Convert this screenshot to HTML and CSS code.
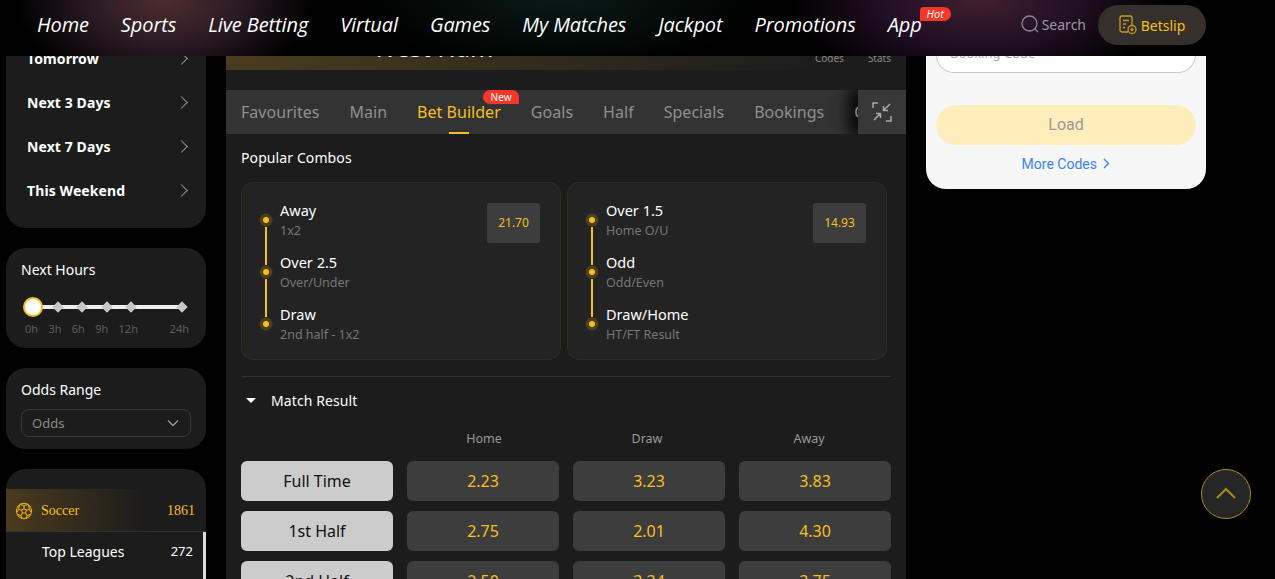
FILE: index.html
```html
<!DOCTYPE html>
<html lang="en">
<head>
  <meta charset="UTF-8">
  <title>Bet Builder</title>
  <link rel="stylesheet" href="styles.css">
</head>
<body>

  <header class="topbar">
    <nav class="nav">
      <a>Home</a>
      <a>Sports</a>
      <a>Live Betting</a>
      <a>Virtual</a>
      <a>Games</a>
      <a>My Matches</a>
      <a>Jackpot</a>
      <a>Promotions</a>
      <a class="nav-app">App<span class="hot">Hot</span></a>
    </nav>
    <div class="search">
      <svg width="20" height="20" viewBox="0 0 20 20" fill="none" stroke="#8d8a90" stroke-width="1.3"><circle cx="9.5" cy="9.5" r="7.5"/><path d="M15 15l3 3"/></svg>
      <span>Search</span>
    </div>
    <div class="betslip">
      <svg width="18" height="20" viewBox="0 0 18 20" fill="none" stroke="#c89a1f" stroke-width="1.3"><path d="M9 17H3a2 2 0 0 1-2-2V3a2 2 0 0 1 2-2h8a2 2 0 0 1 2 2v7"/><path d="M4 5.500h6M4 9h3M4 12.500h2"/><circle cx="13" cy="14.500" r="4"/><path d="M11.300 14.500h3.400M13 12.800v3.400"/></svg>
      <span>Betslip</span>
    </div>
  </header>

  <div class="page">

    <aside class="left">
      <div class="panel days">
        <div class="day">Today<i class="chev"></i></div>
        <div class="day">Tomorrow<i class="chev"></i></div>
        <div class="day">Next 3 Days<i class="chev"></i></div>
        <div class="day">Next 7 Days<i class="chev"></i></div>
        <div class="day">This Weekend<i class="chev"></i></div>
      </div>

      <div class="panel hours">
        <div class="panel-title">Next Hours</div>
        <div class="slider">
          <span class="knob"></span>
          <span class="tick"></span>
          <span class="tick"></span>
          <span class="tick"></span>
          <span class="tick"></span>
          <span class="tick tick-last"></span>
        </div>
        <div class="hour-labels">
          <span>0h</span><span>3h</span><span>6h</span><span>9h</span><span>12h</span><span class="hour-last">24h</span>
        </div>
      </div>

      <div class="panel odds-range">
        <div class="panel-title">Odds Range</div>
        <div class="select">
          <span>Odds</span>
          <svg width="12" height="8" viewBox="0 0 12 8" fill="none" stroke="#999" stroke-width="1.300"><path d="M1 1.500l5 5 5-5"/></svg>
        </div>
      </div>

      <div class="panel sports">
        <div class="sport">
          <svg width="18" height="18" viewBox="0 0 18 18" fill="none" stroke="#e0ab1c" stroke-width="1.100"><circle cx="9" cy="9" r="7.600"/><path d="M9 6.500l2.400 1.700-.9 2.800h-3l-.9-2.800z"/><path d="M9 6.500V3.500L5 2.500M9 3.500l4-1M11.400 8.200l3-1 1.300 2.800M14.400 7.200L13.500 3M10.500 11l1.800 2.600-1.500 3M12.300 13.600l3-1M7.500 11l-1.800 2.600 1.500 3M5.700 13.600l-3-1M6.600 8.200l-3-1-1.300 2.800M3.600 7.200L4.500 3"/></svg>
          <span class="sport-name">Soccer</span>
          <span class="sport-count">1861</span>
        </div>
        <div class="leagues">
          <div class="league"><span>Top Leagues</span><span class="league-count">272</span></div>
        </div>
      </div>
    </aside>

    <main class="center">
      <section class="hero">
        <div class="score">0 00</div>
        <div class="team">West Ham</div>
        <div class="hero-links"><span>Codes</span><span>Stats</span></div>
      </section>

      <div class="tabs">
        <div class="tab-list">
          <a>Favourites</a>
          <a>Main</a>
          <a class="active">Bet Builder<span class="new">New</span></a>
          <a>Goals</a>
          <a>Half</a>
          <a>Specials</a>
          <a>Bookings</a>
          <a>Corners</a>
        </div>
        <div class="collapse">
          <svg width="20" height="20" viewBox="0 0 20 20" fill="none" stroke="#a8a8a8" stroke-width="1.500"><path d="M1 6V1h5M14 19h5v-5M11.500 8.500L18 2M11.500 4v4.500H16M8.500 11.500L2 18M8.500 16v-4.500H4"/></svg>
        </div>
      </div>

      <section class="content">
        <h4 class="combos-title">Popular Combos</h4>
        <div class="combos">
          <div class="combo">
            <div class="legs">
              <div class="leg"><b>Away</b><small>1x2</small></div>
              <div class="leg"><b>Over 2.5</b><small>Over/Under</small></div>
              <div class="leg"><b>Draw</b><small>2nd half - 1x2</small></div>
            </div>
            <div class="combo-odd">21.70</div>
          </div>
          <div class="combo">
            <div class="legs">
              <div class="leg"><b>Over 1.5</b><small>Home O/U</small></div>
              <div class="leg"><b>Odd</b><small>Odd/Even</small></div>
              <div class="leg"><b>Draw/Home</b><small>HT/FT Result</small></div>
            </div>
            <div class="combo-odd">14.93</div>
          </div>
        </div>

        <div class="market-head"><i class="caret"></i>Match Result</div>

        <div class="market">
          <span></span>
          <div class="col-head col-home">Home</div>
          <div class="col-head col-draw">Draw</div>
          <div class="col-head col-away">Away</div>

          <button class="period">Full Time</button>
          <button class="odd">2.23</button>
          <button class="odd">3.23</button>
          <button class="odd">3.83</button>

          <button class="period">1st Half</button>
          <button class="odd">2.75</button>
          <button class="odd">2.01</button>
          <button class="odd">4.30</button>

          <button class="period">2nd Half</button>
          <button class="odd">2.50</button>
          <button class="odd">3.34</button>
          <button class="odd">3.75</button>
        </div>
      </section>
    </main>

    <aside class="right">
      <div class="code-card">
        <div class="code-input">Booking Code</div>
        <div class="load">Load</div>
        <div class="more">More Codes
          <svg width="7" height="11" viewBox="0 0 7 11" fill="none" stroke="#3b82f6" stroke-width="1.400"><path d="M1 1l4.500 4.500L1 10"/></svg>
        </div>
      </div>
    </aside>
  </div>

  <button class="to-top">
    <svg width="20" height="12" viewBox="0 0 20 12" fill="none" stroke="#a98a22" stroke-width="2"><path d="M1 11l9-9 9 9"/></svg>
  </button>

</body>
</html>
```

FILE: styles.css
```css
* {
  box-sizing: border-box;
}

html, body {
  height: 100%;
}

body {
  margin: 0;
  background: #000;
  color: #fff;
  font-family: "Noto Sans", Arial, sans-serif;
  font-size: 14px;
  overflow: hidden;
}

.topbar {
  position: fixed;
  top: 0;
  left: 0;
  right: 0;
  height: 56px;
  z-index: 10;
  display: flex;
  align-items: center;
  padding: 0 69px 6px 37px;
  background:
    radial-gradient(ellipse 150px 90px at 165px 0, #4e2e2e 0%, #2a1a24 50%, rgba(0,0,0,0) 100%),
    radial-gradient(ellipse 190px 90px at 980px 0, #40202e 0%, #220f24 50%, rgba(0,0,0,0) 100%),
    radial-gradient(ellipse 200px 70px at 560px 0, #0a1a16 0%, rgba(0,0,0,0) 100%),
    #000;
}

.nav {
  display: flex;
  gap: 32px;
  flex: 1;
  margin-bottom: 2px;
  font-family: "Open Sans", Arial, sans-serif;
  font-size: 20px;
  font-style: italic;
  letter-spacing: -0.1px;
}

.nav-app {
  position: relative;
}

.hot {
  position: absolute;
  left: 32px;
  top: -4px;
  width: 31px;
  height: 14px;
  border-radius: 4px 7px 7px 0;
  background: #f5372a;
  font-size: 11px;
  line-height: 14px;
  text-align: center;
  letter-spacing: 0;
}

.search {
  display: flex;
  align-items: center;
  gap: 2px;
  margin-right: 12px;
  margin-bottom: 2px;
  color: #9a98a0;
}

.betslip {
  width: 108px;
  height: 40px;
  border-radius: 20px;
  background: #35302c;
  color: #f8bf1e;
  display: flex;
  align-items: center;
  justify-content: center;
  gap: 4px;
}

.page {
  display: flex;
  gap: 20px;
  margin-top: -20px;
  padding-left: 6px;
  align-items: flex-start;
}

.left {
  width: 200px;
  display: flex;
  flex-direction: column;
  gap: 20px;
}

.panel {
  background: #1c1c1c;
  border-radius: 20px;
}

.days {
  padding-top: 12px;
  padding-bottom: 16px;
}

.day {
  height: 44px;
  padding: 0 20px 0 21px;
  display: flex;
  align-items: center;
  justify-content: space-between;
  font-weight: 700;
  font-size: 14px;
  letter-spacing: 0.1px;
}

.chev {
  width: 9px;
  height: 9px;
  border-top: 1.500px solid #999;
  border-right: 1.500px solid #999;
  transform: rotate(45deg);
}

.panel-title {
  font-size: 14px;
  line-height: 20px;
}

.hours {
  height: 100px;
  padding: 12px 15px 0;
}

.slider {
  position: relative;
  display: flex;
  align-items: center;
  gap: 16.300px;
  height: 20px;
  margin: 17px 1px 0 2px;
  padding-left: 31px;
}

.slider::before {
  content: "";
  position: absolute;
  left: 4px;
  right: 4px;
  top: 8px;
  height: 4px;
  background: #eee;
}

.knob {
  position: absolute;
  left: 0;
  top: 0;
  width: 20px;
  height: 20px;
  border-radius: 50%;
  background: #fff;
  border: 2px solid #f8bf1e;
  z-index: 1;
}

.tick {
  position: relative;
  width: 8px;
  height: 8px;
  background: #c8c8c8;
  transform: rotate(45deg);
}

.tick-last {
  margin-left: 27px;
}

.hour-labels {
  display: flex;
  margin: 4px 0 0 4px;
  font-size: 11px;
  color: #5c5c5c;
  gap: 10.300px;
}

.hour-last {
  margin-left: auto;
  margin-right: 2px;
}

.odds-range {
  height: 81px;
  padding: 12px 15px 0;
}

.select {
  margin-top: 9px;
  height: 28px;
  padding: 0 11px 0 10px;
  border: 1px solid #3a3a3a;
  border-radius: 8px;
  display: flex;
  align-items: center;
  justify-content: space-between;
  font-size: 13px;
  color: #8a8a8a;
}

.sports {
  height: 300px;
  padding-top: 20px;
}

.sport {
  height: 43px;
  padding: 2px 11px 0 9px;
  display: flex;
  align-items: center;
  background: linear-gradient(to right, #4a3b1e, rgba(74,59,30,0) 70%);
  border-bottom: 1px solid #333;
  color: #f8bf1e;
  font-family: "Liberation Serif", serif;
  font-size: 14px;
}

.sport-name {
  margin-left: 8px;
  flex: 1;
}

.leagues {
  height: 220px;
  border-right: 3px solid #ddd;
}

.league {
  height: 38px;
  padding: 0 10px 0 36px;
  display: flex;
  align-items: center;
  justify-content: space-between;
}

.league-count {
  font-size: 13px;
}

.center {
  width: 680px;
  background: #1c1c1c;
  min-height: 700px;
}

.hero {
  position: relative;
  height: 90px;
  padding: 52px 15px 0;
  display: flex;
  background: linear-gradient(to right, #4a3c1e, rgba(72,59,30,0) 88%);
}

.score {
  font-size: 22px;
  width: 135px;
  margin-right: -3px;
  color: #ccc;
  padding-left: 28px;
  line-height: 30px;
  letter-spacing: 3px;
}

.team {
  font-size: 25px;
  line-height: 30px;
  flex: 1;
}

.hero-links {
  display: flex;
  gap: 24px;
  color: #8a8a8a;
  font-size: 10px;
  padding-top: 24px;
  margin-top: -5px;
}

.tabs {
  position: relative;
  margin-top: 20px;
  height: 44px;
  background: #333;
  display: flex;
  overflow: hidden;
}

.tab-list {
  flex: 1;
  display: flex;
  gap: 30px;
  padding-left: 15px;
  font-size: 16px;
  letter-spacing: 0.03px;
  line-height: 44px;
  color: #8f8f8f;
  white-space: nowrap;
  overflow: hidden;
}

.tab-list a {
  position: relative;
}

.tab-list .active {
  color: #f8bf1e;
}

.tab-list .active::after {
  content: "";
  position: absolute;
  left: 32px;
  bottom: 0;
  width: 20px;
  height: 2px;
  background: #f8bf1e;
}

.new {
  position: absolute;
  left: 66px;
  top: 0;
  width: 36px;
  height: 14px;
  background: #f5372a;
  color: #fff;
  font-size: 10px;
  line-height: 14px;
  text-align: center;
  border-radius: 7px 7px 0 7px;
}

.collapse {
  width: 48px;
  height: 44px;
  background: #383838;
  box-shadow: -8px 0 14px 2px rgba(0,0,0,0.85);
  display: flex;
  align-items: center;
  justify-content: center;
}

.content {
  padding: 0 15px;
}

.combos-title {
  margin: 0;
  padding-top: 14px;
  font-size: 14px;
  line-height: 20px;
  font-weight: 400;
  letter-spacing: 0.1px;
}

.combos {
  display: flex;
  gap: 6px;
  margin-top: 14px;
  padding-bottom: 16px;
  border-bottom: 1px solid #333;
}

.combo {
  width: 320px;
  height: 178px;
  background: #232323;
  border: 1px solid #2f2c1e;
  border-radius: 12px;
  padding: 18px 20px 0 38px;
  display: flex;
  justify-content: space-between;
  align-items: flex-start;
}

.leg {
  position: relative;
  height: 52px;
}

.leg b {
  display: block;
  font-weight: 400;
  font-size: 14.500px;
  line-height: 18px;
  color: #fff;
}

.leg small {
  display: block;
  margin-top: 3px;
  font-size: 12.500px;
  line-height: 18px;
  color: #777;
}

/* dot and line on the left of each leg */
.leg::before {
  content: "";
  position: absolute;
  left: -17px;
  top: 16px;
  width: 6px;
  height: 6px;
  background: #f8bf1e;
  border-radius: 50%;
  box-shadow: 0 0 0 3.500px #4b3f1c;
  z-index: 1;
}

.leg:not(:last-child)::after {
  content: "";
  position: absolute;
  left: -15px;
  top: 26px;
  width: 2px;
  height: 38px;
  background: #f8bf1e;
}

.combo-odd {
  width: 53px;
  height: 40px;
  margin-top: 2px;
  background: #3d3d3d;
  border-radius: 3px;
  color: #f8bf1e;
  font-size: 12px;
  line-height: 40px;
  text-align: center;
}

.market-head {
  display: flex;
  align-items: center;
  height: 46px;
  font-size: 14px;
  letter-spacing: 0.1px;
}

.caret {
  width: 0;
  height: 0;
  margin: 0 15px 0 5px;
  border-left: 5px solid transparent;
  border-right: 5px solid transparent;
  border-top: 5px solid #fff;
}

.market {
  display: grid;
  grid-template-columns: repeat(4, 152px);
  column-gap: 14px;
  row-gap: 10px;
  margin-top: 8px;
}

.col-head {
  height: 16px;
  margin-bottom: 4px;
  line-height: 16px;
  font-size: 12.500px;
  color: #999;
  text-align: center;
}

.col-home {
  padding-left: 2px;
}

.col-draw {
  padding-right: 4px;
}

.col-away {
  padding-right: 12px;
}

.market button {
  height: 40px;
  border: none;
  border-radius: 6px;
  font-family: inherit;
  font-size: 16px;
  padding: 0;
}

.period {
  background: #ccc;
  color: #111;
}

.odd {
  background: #3d3d3d;
  color: #f8bf1e;
}

.right {
  width: 280px;
}

.code-card {
  height: 209px;
  background: #f7f7f7;
  border-radius: 0 0 20px 20px;
  padding: 0 10px;
}

.code-input {
  height: 93px;
  padding: 64px 13px 0;
  background: #fff;
  border: 1px solid #ccc;
  border-top: none;
  border-radius: 0 0 18px 18px;
  color: #aaa;
  font-size: 13px;
}

.load {
  margin-top: 32px;
  height: 40px;
  border-radius: 20px;
  background: #ffeebc;
  color: #999;
  font-family: Roboto, Arial, sans-serif;
  font-size: 16px;
  line-height: 40px;
  text-align: center;
}

.more {
  margin-top: 11px;
  color: #3b82f6;
  font-family: Roboto, Arial, sans-serif;
  font-size: 14px;
  text-align: center;
}

.more svg {
  margin-left: 3px;
}

.to-top {
  position: fixed;
  left: 1201px;
  top: 469px;
  width: 50px;
  height: 50px;
  border-radius: 50%;
  border: 1px solid #a98a22;
  background: #262626;
  padding: 0;
}
```
